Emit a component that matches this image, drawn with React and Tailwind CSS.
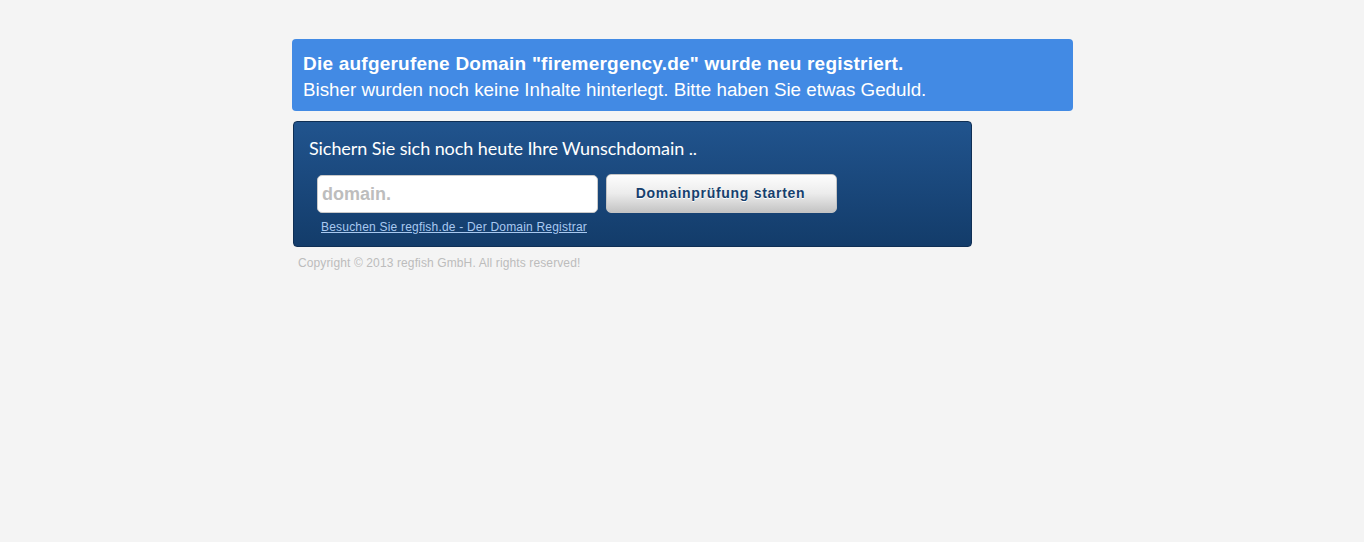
import React from 'react';

const App = () => {
  return (
    <div className="min-h-[542px] w-full bg-[#f4f4f4] pt-[39px] font-['Liberation_Sans',Arial,sans-serif]">
      <div className="ml-[292px] w-[781px]">
        {/* notice */}
        <div className="h-[72px] rounded-[4px] bg-[#428ae4] pl-[11px] pt-[12px] leading-[26px] text-white">
          <div className="text-[19px] font-bold tracking-[0.22px]">Die aufgerufene Domain "firemergency.de" wurde neu registriert.</div>
          <div className="text-[18.8px]">Bisher wurden noch keine Inhalte hinterlegt. Bitte haben Sie etwas Geduld.</div>
        </div>

        {/* search box */}
        <div className="ml-px mt-[10px] h-[126px] w-[679px] rounded-[4px] border border-[#0f2f55] bg-gradient-to-b from-[#21548e] to-[#133c6a] pl-[15px] pt-[13px]">
          <h1 className="font-['Lato',sans-serif] text-[18px] font-normal leading-[26px] tracking-[-0.07px] text-white">
            Sichern Sie sich noch heute Ihre Wunschdomain ..
          </h1>
          <div className="ml-[8px] mt-[13px] flex items-start gap-[8px]">
            <input
              className="mt-px h-[38px] w-[281px] rounded-[5px] border border-[#c9c9c9] bg-white px-[4px] text-[18px] font-bold text-[#555] outline-none placeholder:text-[#bdbdbd]"
              placeholder="domain."
            />
            <button className="h-[39px] w-[231px] rounded-[5px] border border-[#c4c4c4] bg-gradient-to-b from-[#fdfdfd] via-[#ececec] to-[#c4c4c4] pr-[2px] text-[14px] font-bold tracking-[0.7px] text-[#163f6e] [text-shadow:0_1px_0_#fff]">
              Domainprüfung starten
            </button>
          </div>
          <a href="#" className="ml-[12px] mt-[7px] inline-block text-[12px] leading-[14px] tracking-[0.2px] text-[#a9c9f0] underline">
            Besuchen Sie regfish.de - Der Domain Registrar
          </a>
        </div>

        <div className="ml-[6px] mt-[9px] text-[12px] leading-[14px] tracking-[0.12px] text-[#bcbcbc]">
          Copyright © 2013 regfish GmbH. All rights reserved!
        </div>
      </div>
    </div>
  );
};

export default App;
